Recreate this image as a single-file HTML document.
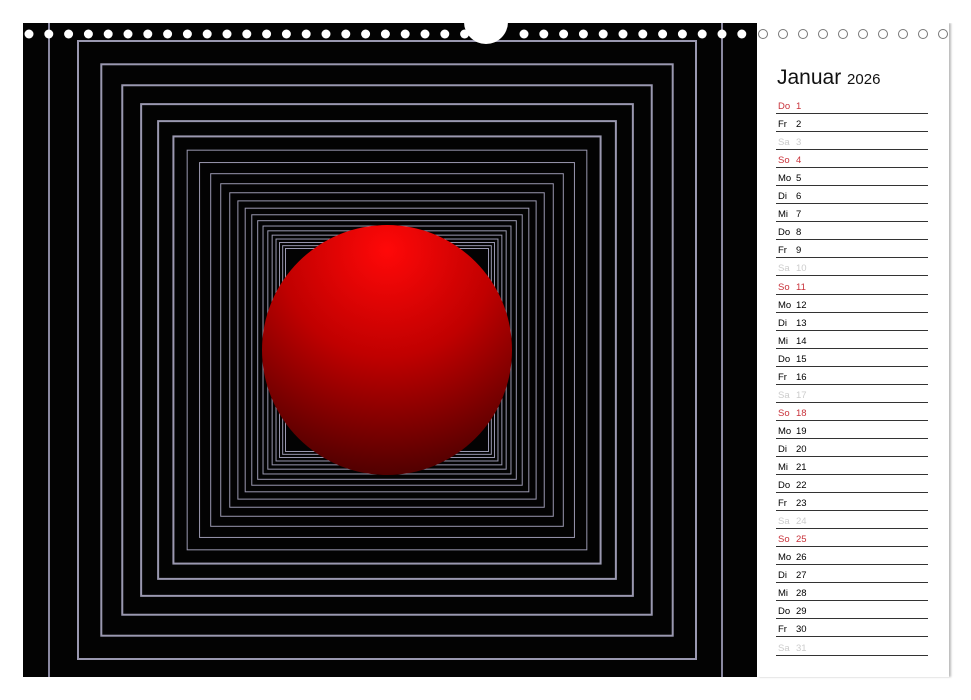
<!DOCTYPE html><html><head><style>
body{margin:0;width:971px;height:700px;background:#fff;position:relative;overflow:hidden;font-family:"Liberation Sans",sans-serif}
#img{position:absolute;left:23px;top:23px;width:734px;height:654px;background:#030303;overflow:hidden}
#panel{position:absolute;left:757px;top:23px;width:192px;height:654px;background:#fff;box-shadow:2px 0 2px #bbb}
.t{position:absolute;left:777px;top:66px;font-size:21px;color:#111}
.t span{font-size:15px}
.r{position:absolute;left:776px;width:152px;height:14px;border-bottom:1.5px solid #333;font-size:9.5px;line-height:15px}
.r b{font-weight:normal;display:inline-block;width:18px;margin-left:2px}
.red{color:#c8323a}.gr{color:#ccc}
</style></head><body>
<div id="img"><svg width="734" height="654" id="sv"><defs><radialGradient id="g" cx="0.5" cy="0.1" r="0.95"><stop offset="0" stop-color="#ff0808"/><stop offset="0.45" stop-color="#c00000"/><stop offset="1" stop-color="#450000"/></radialGradient></defs></svg></div>
<div id="panel"></div>
<div class="t">Januar <span>2026</span></div>
<div id="rows"></div>
<svg style="position:absolute;left:0;top:0" width="971" height="60" id="top"></svg>
<script>
var ns="http://www.w3.org/2000/svg",sv=document.getElementById('sv');
function el(p,t,a){var e=document.createElementNS(ns,t);for(var k in a)e.setAttribute(k,a[k]);p.appendChild(e);return e}
var cx=364,cy=327;
el(sv,'line',{x1:26,y1:0,x2:26,y2:654,stroke:'#8a88a0','stroke-width':2});
el(sv,'line',{x1:699,y1:0,x2:699,y2:654,stroke:'#8a88a0','stroke-width':2});
var h=309;while(h>100){el(sv,'rect',{x:cx-h,y:cy-h,width:2*h,height:2*h,fill:'none',stroke:'#9a98b0','stroke-width':h>200?2:1});h=76+(h-76)*0.9;}
el(sv,'circle',{cx:cx,cy:cy,r:125,fill:'url(#g)'});
var tp=document.getElementById('top');
for(var i=0;i<37;i++){var x=29+i*19.8;if(x>472&&x<506)continue;if(x<757)el(tp,'circle',{cx:x,cy:34,r:4.5,fill:'#fff'});}
for(var i=0;i<10;i++)el(tp,'circle',{cx:763+i*20,cy:34,r:4.5,fill:'none',stroke:'#777','stroke-width':1});
el(tp,'circle',{cx:486,cy:22,r:22,fill:'#fff'});
el(tp,'rect',{x:0,y:0,width:971,height:23,fill:'#fff'});
var d=['Do','Fr','Sa','So','Mo','Di','Mi'],h2='';
for(var n=1;n<=31;n++){var w=d[(n-1)%7],c=(w=='So'||n==1)?'red':(w=='Sa'?'gr':'');
h2+='<div class="r '+c+'" style="top:'+(99+(n-1)*18.05)+'px"><b>'+w+'</b>'+n+'</div>';}
document.getElementById('rows').innerHTML=h2;
</script>
</body></html>
